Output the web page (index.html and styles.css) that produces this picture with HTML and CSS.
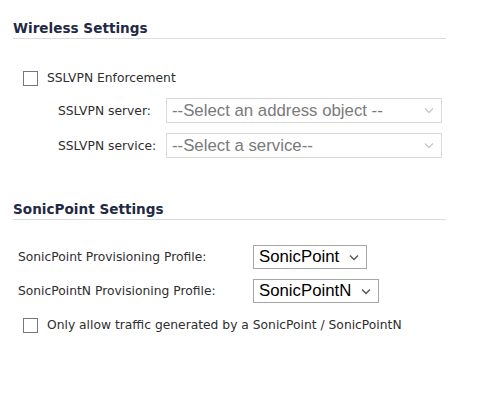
FILE: index.html
```html
<!DOCTYPE html>
<html>
<head>
  <title>Wireless Settings</title>
  <link rel="stylesheet" href="styles.css">
</head>
<body>
  <div class="page">
    <h2 class="section-title">Wireless Settings</h2>
    <div class="check-row first">
      <span class="checkbox"></span>
      <span class="check-label">SSLVPN Enforcement</span>
    </div>
    <div class="field-row server">
      <span class="field-label">SSLVPN server:</span>
      <div class="select wide disabled">
        <span>--Select an address object --</span>
        <svg width="10" height="7" viewBox="0 0 10 7"><path d="M1 1.5 L5 5.5 L9 1.5" fill="none" stroke="#c8c8c8" stroke-width="1.3"/></svg>
      </div>
    </div>
    <div class="field-row service">
      <span class="field-label">SSLVPN service:</span>
      <div class="select wide disabled">
        <span>--Select a service--</span>
        <svg width="10" height="7" viewBox="0 0 10 7"><path d="M1 1.5 L5 5.5 L9 1.5" fill="none" stroke="#c8c8c8" stroke-width="1.3"/></svg>
      </div>
    </div>

    <h2 class="section-title sonic">SonicPoint Settings</h2>
    <div class="profile-row top">
      <span class="profile-label">SonicPoint Provisioning Profile:</span>
      <div class="select">
        <span>SonicPoint</span>
        <svg width="10" height="7" viewBox="0 0 10 7"><path d="M1 1.5 L5 5.5 L9 1.5" fill="none" stroke="#555" stroke-width="1.4"/></svg>
      </div>
    </div>
    <div class="profile-row">
      <span class="profile-label">SonicPointN Provisioning Profile:</span>
      <div class="select">
        <span>SonicPointN</span>
        <svg width="10" height="7" viewBox="0 0 10 7"><path d="M1 1.5 L5 5.5 L9 1.5" fill="none" stroke="#555" stroke-width="1.4"/></svg>
      </div>
    </div>
    <div class="check-row last">
      <span class="checkbox"></span>
      <span class="check-label">Only allow traffic generated by a SonicPoint / SonicPointN</span>
    </div>
  </div>
</body>
</html>
```

FILE: styles.css
```css
body {
  margin: 0;
  padding: 0;
  background: #fff;
  font-family: "DejaVu Sans", Verdana, sans-serif;
  color: #2e2e2e;
}
.page {
  padding: 20px 0 0 13px;
  width: 433px;
}
.section-title {
  margin: 0;
  height: 17px;
  padding-bottom: 1px;
  border-bottom: 1px solid #dcdcdc;
  font-size: 13.6px;
  line-height: 17px;
  font-weight: bold;
  color: #1f2a44;
}
.section-title.sonic {
  margin-top: 43px;
}
.check-row {
  display: flex;
  align-items: center;
  height: 16px;
  padding-left: 10px;
}
.check-row.first {
  margin-top: 31px;
}
.check-row.last {
  margin-top: 14px;
}
.checkbox {
  width: 13px;
  height: 13px;
  border: 1px solid #777;
  background: #fff;
  margin-right: 9px;
}
.check-label {
  font-size: 12.3px;
}
.field-row {
  display: flex;
  align-items: center;
  padding-left: 45px;
}
.field-row.server {
  margin-top: 12px;
}
.field-row.service {
  margin-top: 10px;
}
.field-label {
  width: 108px;
  font-size: 12.3px;
}
.select {
  display: flex;
  align-items: center;
  justify-content: space-between;
  height: 22px;
  padding: 0 7px 0 5px;
  border: 1px solid #a6a6a6;
  background: #fff;
  font-family: "Liberation Sans", Arial, sans-serif;
  font-size: 16.8px;
  color: #000;
}
.select.wide {
  width: 262px;
  height: 23px;
  border-color: #dadada;
}
.select.disabled {
  color: #7a7a7a;
}
.select span {
  margin-right: 10px;
}
.profile-row {
  display: flex;
  align-items: center;
  padding-left: 5px;
  margin-top: 10px;
}
.profile-row.top {
  margin-top: 25px;
}
.profile-label {
  width: 235px;
  font-size: 12.3px;
}
```
